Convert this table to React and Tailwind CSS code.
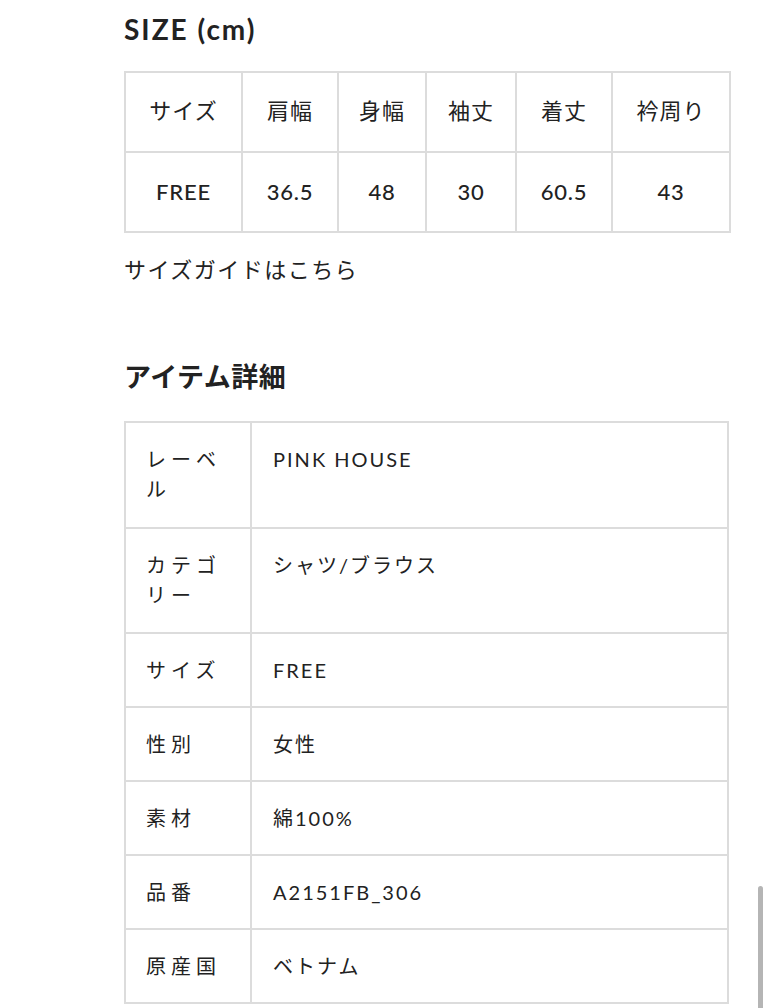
const sizeHead = ["サイズ", "肩幅", "身幅", "袖丈", "着丈", "衿周り"];
const sizeRow = ["FREE", "36.5", "48", "30", "60.5", "43"];
const colW = ["w-[117px]", "w-[96px]", "w-[88px]", "w-[90px]", "w-[96px]", "w-[118px]"];

const details = [
  ["レーベル", "PINK HOUSE"],
  ["カテゴリー", "シャツ/ブラウス"],
  ["サイズ", "FREE"],
  ["性別", "女性"],
  ["素材", "綿100%"],
  ["品番", "A2151FB_306"],
  ["原産国", "ベトナム"],
];

const font = { fontFamily: '"Lato", "Noto Sans CJK JP", sans-serif' };

export default function App() {
  return (
    <div className="relative min-h-[1008px] bg-white text-[#222]" style={font}>
      <div className="ml-[124px] w-[605px]">
        {/* SIZE */}
        <h2 className="pt-[11px] text-[28px] font-bold leading-[36px] tracking-[2px]">SIZE (cm)</h2>
        <table className="mt-[24px] w-[605px] table-fixed border-collapse">
          <tbody>
            <tr>
              {sizeHead.map((h, i) => (
                <td key={h} className={`${colW[i]} h-[80px] pb-[4px] border-2 border-[#dcdcdc] text-center text-[22px] tracking-[1px]`}>
                  {h}
                </td>
              ))}
            </tr>
            <tr>
              {sizeRow.map((v) => (
                <td key={v} className="h-[80px] pb-[2px] border-2 border-[#dcdcdc] text-center text-[22px] font-medium tracking-[0.8px]">
                  {v}
                </td>
              ))}
            </tr>
          </tbody>
        </table>
        <p className="mt-[22px] text-[22px] leading-[30px] tracking-[1.5px]">サイズガイドはこちら</p>

        {/* アイテム詳細 */}
        <h2 className="mt-[74px] text-[27px] font-bold leading-[36px] tracking-[0.5px]">アイテム詳細</h2>
        <table className="mt-[26px] w-[605px] table-fixed border-collapse">
          <tbody>
            {details.map(([k, v]) => {
              const pb = k.length > 3 ? "pb-[22.5px]" : "pb-[21px]";
              return (
                <tr key={k}>
                  <td className={`w-[126px] border-2 border-[#dcdcdc] px-[20px] pt-[21px] ${pb} align-top text-[20px] leading-[30px] tracking-[5px]`}>
                    {k}
                  </td>
                  <td className={`border-2 border-[#dcdcdc] px-[21px] pt-[21px] ${pb} align-top text-[20px] leading-[30px] tracking-[2px]`}>
                    {v}
                  </td>
                </tr>
              );
            })}
          </tbody>
        </table>
      </div>
      <div className="absolute left-[758px] top-[886px] h-[122px] w-[5px] rounded-t-full bg-[#b5b5b5]" />
    </div>
  );
}
